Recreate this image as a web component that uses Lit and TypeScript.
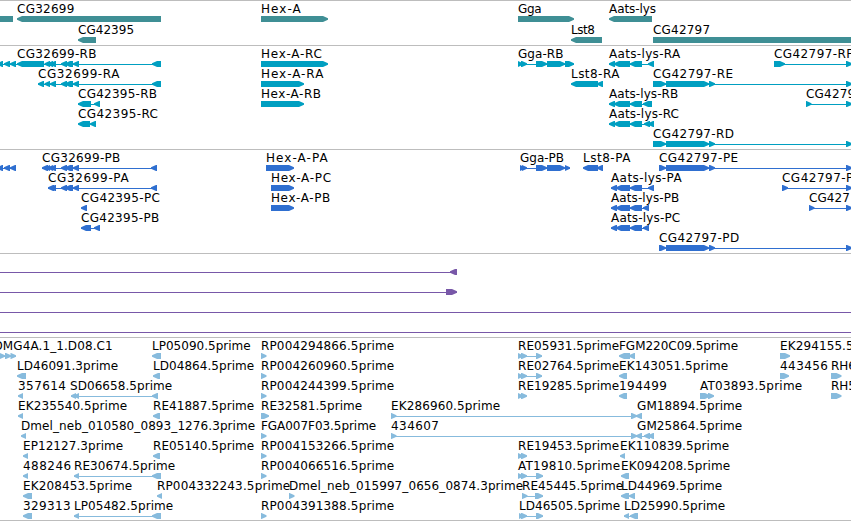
import { LitElement, html, svg, css } from "lit";
import { customElement, property } from "lit/decorators.js";

// Exon: [start, end]; positive strand points right, negative left, 0 is a plain bar.
type Strand = 1 | -1 | 0;
type Seg = [number, number, Strand?];
// Label: [text, x, right edge of the text (omitted when natural width is used)]
type Label = [string, number, number?];
interface Feature { row: number; dir: Strand; segs: Seg[]; span?: [number, number]; }
interface Track { height: number; color: string; rows: number[]; labels: [number, Label[]][]; features: Feature[]; }

const f = (row: number, dir: Strand, segs: Seg[], span?: [number, number]): Feature => ({ row, dir, segs, span });

const END: Seg = [846, 852];
const aats: Seg[] = [[609, 615], [614, 630], [630, 642]];
const aatsP: Seg[] = [[611, 617], [616, 630], [630, 642]];
const dot: Seg[] = [[261, 266.5]];
const pair: Seg[] = [[518, 523], [521, 527]];
const left: Seg[] = [[-3, 3], [4, 10], [10, 16]];
const mid: Seg[] = [[61, 67], [65, 73], [73, 79]];

const genes: Track = {
  height: 45, color: "#3f8f95", rows: [16, 37],
  labels: [
    [0, [["CG32699", 17, 73.7], ["Hex-A", 261, 300], ["Gga", 518, 541], ["Aats-lys", 609, 655.3]]],
    [1, [["CG42395", 78, 133.4], ["Lst8", 571, 594.3], ["CG42797", 653, 709.4]]],
  ],
  features: [
    f(0, 0, [[-5, 13]]), f(0, -1, [[17, 161]]), f(0, 1, [[261, 328]]), f(0, 1, [[518, 574]]), f(0, -1, [[609, 652]]),
    f(1, -1, [[78, 96]]), f(1, -1, [[571, 602]]), f(1, 0, [[653, 852]]),
  ],
};

const transcripts: Track = {
  height: 104, color: "#009fc1", rows: [16, 36, 56, 76, 96],
  labels: [
    [0, [["CG32699-RB", 17, 95.7], ["Hex-A-RC", 261, 321.3], ["Gga-RB", 518, 562.7], ["Aats-lys-RA", 609, 679.5], ["CG42797-RF", 774, 852.4]]],
    [1, [["CG32699-RA", 38, 118.7], ["Hex-A-RA", 261, 322.7], ["Lst8-RA", 571, 618.7], ["CG42797-RE", 653, 732.3]]],
    [2, [["CG42395-RB", 78, 156.3], ["Hex-A-RB", 261, 320.3], ["Aats-lys-RB", 609, 677.5], ["CG42797", 806, 862.4]]],
    [3, [["CG42395-RC", 78, 157.3], ["Aats-lys-RC", 609, 678.3]]],
    [4, [["CG42797-RD", 653, 733.3]]],
  ],
  features: [
    f(0, -1, [...left, [17, 44], [44.5, 50], [47.5, 53], [50, 56], ...mid, [152, 161]], [-3, 161]),
    f(0, 1, [[261, 328]]),
    f(0, 1, [[518, 523], [521, 527], [536, 547], [547, 565], [565, 574]], [518, 574]),
    f(0, -1, [...aats, [648, 654]], [609, 654]),
    f(0, 1, [[774, 785], END], [774, 852]),
    f(1, -1, [[38, 44], [44.5, 50], [50, 56], ...mid, [152, 161]], [38, 161]),
    f(1, 1, [[261, 304]]),
    f(1, -1, [[571, 598], [597, 603]]),
    f(1, 1, [[653, 666], [666, 709], [709, 715], END], [653, 852]),
    f(2, -1, [[78, 91], [94, 100]], [78, 100]),
    f(2, 1, [[261, 304]]),
    f(2, -1, [...aats, [643, 652]], [609, 652]),
    f(2, 1, [[806, 811.5], END], [806, 852]),
    f(3, -1, [[78, 90], [90, 96]]),
    f(3, -1, [...aats, [644, 650], [648, 654]], [609, 654]),
    f(4, 1, [[653, 666], [666, 709], [709, 715], END], [653, 852]),
  ],
};

const proteins: Track = {
  height: 104, color: "#2f6fd0", rows: [16, 36, 56, 76, 96],
  labels: [
    [0, [["CG32699-PB", 42, 119.6], ["Hex-A-PA", 266, 327], ["Gga-PB", 520, 563.4], ["Lst8-PA", 583, 629.7], ["CG42797-PE", 659, 737.5]]],
    [1, [["CG32699-PA", 48, 128], ["Hex-A-PC", 271, 330.4], ["Aats-lys-PA", 611, 681], ["CG42797-PF", 782, 860]]],
    [2, [["CG42395-PC", 81, 159.3], ["Hex-A-PB", 271, 329.6], ["Aats-lys-PB", 611, 678.6], ["CG427", 809, 849.2]]],
    [3, [["CG42395-PB", 81, 158.5], ["Aats-lys-PC", 611, 679.5]]],
    [4, [["CG42797-PD", 659, 738.5]]],
  ],
  features: [
    f(0, -1, left, [-3, 16]),
    f(0, -1, [[42, 48], [45, 50], [48, 53], [50, 56], ...mid, [151, 157]], [42, 157]),
    f(0, 1, [[266, 294]]),
    f(0, 1, [[520, 525], [522, 527], [536, 547], [547, 565], [565, 570]], [520, 570]),
    f(0, -1, [[583, 598], [597, 603]]),
    f(0, 1, [[659, 666], [666, 709], [709, 715], END], [659, 852]),
    f(1, -1, [[48, 54], [50, 56], ...mid, [151, 157]], [48, 157]),
    f(1, 1, [[271, 294]]),
    f(1, -1, [...aatsP, [648, 654]], [611, 654]),
    f(1, 1, [[782, 788], END], [782, 852]),
    f(2, -1, [[81, 87]]),
    f(2, 1, [[271, 294]]),
    f(2, -1, [...aatsP, [643, 649]], [611, 649]),
    f(2, 1, [[809, 814.5], END], [809, 852]),
    f(3, -1, [[81, 91], [94, 100]], [81, 100]),
    f(3, -1, [...aatsP, [643, 649]], [611, 649]),
    f(4, 1, [[659, 666], [666, 709], [709, 715], END], [659, 852]),
  ],
};

const insertions: Track = {
  height: 84, color: "#7858a8", rows: [16, 36, 56, 76], labels: [],
  features: [
    f(0, -1, [[450, 457]], [0, 457]),
    f(1, 1, [[446, 457]], [0, 457]),
    f(2, 0, [], [0, 852]),
    f(3, 0, [], [0, 852]),
  ],
};

const ests: Track = {
  height: 183, color: "#87bbdd", rows: [16, 36, 56, 76, 96, 116, 136, 156, 176],
  labels: [
    [0, [["DMG4A.1_1.D08.C1", -6.5, 112], ["LP05090.5prime", 152, 250], ["RP004294866.5prime", 261, 393.5], ["RE05931.5prime", 518, 618.5], ["FGM220C09.5prime", 619, 737.4], ["EK294155.5prime", 780, 888.5]]],
    [1, [["LD46091.3prime", 17, 117.5], ["LD04864.5prime", 153, 253.5], ["RP004260960.5prime", 261, 393.5], ["RE02764.5prime", 518, 618.5], ["EK143051.5prime", 619, 727.5], ["443456", 780, 827.3], ["RH6", 831]]],
    [2, [["357614", 18, 65.3], ["SD06658.5prime", 70, 171.5], ["RP004244399.5prime", 261, 393.5], ["RE19285.5prime", 518, 618.5], ["194499", 619, 666.3], ["AT03893.5prime", 700, 801.5], ["RH5", 831]]],
    [3, [["EK235540.5prime", 18, 126.5], ["RE41887.5prime", 153, 253.5], ["RE32581.5prime", 261, 361.5], ["EK286960.5prime", 391, 499.5], ["GM18894.5prime", 637, 741.5]]],
    [4, [["Dmel_neb_010580_0893_1276.3prime", 21, 254.5], ["FGA007F03.5prime", 261, 375.5], ["434607", 391, 438.3], ["GM25864.5prime", 637, 741.5]]],
    [5, [["EP12127.3prime", 23, 122.5], ["RE05140.5prime", 153, 253.5], ["RP004153266.5prime", 261, 393.5], ["RE19453.5prime", 518, 618.5], ["EK110839.5prime", 620, 728.5]]],
    [6, [["488246", 23, 70.5], ["RE30674.5prime", 74, 174.5], ["RP004066516.5prime", 261, 393.5], ["AT19810.5prime", 518, 619.4], ["EK094208.5prime", 621, 729.5]]],
    [7, [["EK208453.5prime", 23, 131.5], ["RP004332243.5prime", 157, 289.5], ["Dmel_neb_015997_0656_0874.3prime", 289, 522.5], ["RE45445.5prime", 522, 622.5], ["LD44969.5prime", 621, 721.5]]],
    [8, [["329313", 23, 70], ["LP05482.5prime", 74, 172.5], ["RP004391388.5prime", 261, 393.5], ["LD46505.5prime", 519, 619.4], ["LD25990.5prime", 624, 724.5]]],
  ],
  features: [
    f(0, 1, [[-1, 5], [5, 11], [10.5, 16]], [-3, 16]), f(0, -1, [[152, 161]]), f(0, 1, dot),
    f(0, 1, [...pair, [536, 542]], [518, 542]), f(0, -1, [[619, 630], [629, 635]]), f(0, 1, [[780, 790]]),
    f(1, -1, [[17, 26]]), f(1, -1, [[153, 160]]), f(1, 1, dot),
    f(1, 1, [...pair, [536, 542]], [518, 542]), f(1, -1, [[619, 627]]), f(1, 1, [[780, 789]]), f(1, 1, [[831, 841.5]]),
    f(2, -1, [[18, 23]]), f(2, -1, [[71, 76], [74, 79], [152, 158]], [71, 158]), f(2, 1, dot),
    f(2, 1, pair), f(2, -1, [[619, 627]]), f(2, 1, [[700, 710], [708, 714]]), f(2, 1, [[831, 841.5]]),
    f(3, -1, [[18, 23]]), f(3, -1, [[153, 160]]), f(3, 1, [[261, 269]]),
    f(3, 1, [[391, 396.5], [631, 637], [636, 642, -1]], [391, 642]),
    f(4, -1, [[21, 26]]), f(4, 1, dot),
    f(4, 1, [[391, 396.5], [631, 637], [636, 642, -1], [644, 650, -1], [648, 654, -1]], [391, 654]),
    f(5, -1, [[23, 28]]), f(5, -1, [[153, 160]]), f(5, 1, dot), f(5, 1, pair), f(5, -1, [[620, 625]]),
    f(6, -1, [[23, 28]]), f(6, -1, [[74, 79], [152, 161]], [74, 161]), f(6, 1, dot),
    f(6, 1, [...pair, [536, 543]], [518, 543]), f(6, -1, [[621, 629]]),
    f(7, -1, [[23, 32]]), f(7, -1, [[157, 162]]), f(7, 1, [[289, 294.5]]),
    f(7, 1, [[522, 527.5], [535, 543]], [522, 543]), f(7, -1, [[621, 629], [629, 635]]),
    f(8, -1, [[23, 32]]), f(8, -1, [[74, 79], [152, 161]], [74, 161]), f(8, 1, dot),
    f(8, 1, [[519, 524], [521, 527], [536, 543]], [519, 543]), f(8, -1, [[624, 629], [630, 638]], [624, 638]),
  ],
};

@customElement("feature-track")
class FeatureTrack extends LitElement {
  @property({ attribute: false }) track!: Track;

  static styles = css`
    :host { display: block; box-sizing: border-box; border-top: 1px solid #bdbdbd; overflow: hidden; flex: none; }
    .canvas { display: block; }
    .label { font: 12px "DejaVu Sans", sans-serif; fill: #000; }
  `;

  private segment(y: number, [a, b, own]: Seg, dir: Strand) {
    const d = own ?? dir;
    const h = Math.min(5, b - a);
    const [t, u, v] = [y + 2.3, y + 3.7, y + 6];
    const points =
      d === 1 ? `${a},${y} ${b - h},${y} ${b},${t} ${b},${u} ${b - h},${v} ${a},${v}`
      : d === -1 ? `${b},${y} ${a + h},${y} ${a},${t} ${a},${u} ${a + h},${v} ${b},${v}`
      : `${a},${y} ${b},${y} ${b},${v} ${a},${v}`;
    return svg`<polygon points=${points}></polygon>`;
  }

  private label(y: number, [text, x, end]: Label) {
    return end === undefined
      ? svg`<text class="label" x=${x} y=${y}>${text}</text>`
      : svg`<text class="label" x=${x} y=${y} textLength=${end - x + 0.7}>${text}</text>`;
  }

  render() {
    const { height, color, rows, labels, features } = this.track;
    // Drawing starts below the one pixel separator.
    const top = (row: number) => rows[row] - 1;
    return html`<svg class="canvas" width="851" height=${height - 1}>
      <g fill=${color}>
        ${features.map((ft) => svg`
          ${ft.span ? svg`<rect x=${ft.span[0]} y=${top(ft.row) + 3} width=${ft.span[1] - ft.span[0]} height="1"></rect>` : ""}
          ${ft.segs.map((s) => this.segment(top(ft.row), s, ft.dir))}`)}
      </g>
      ${labels.map(([row, items]) => items.map((l) => this.label(top(row) - 3, l)))}
    </svg>`;
  }
}

@customElement("app-root")
class AppRoot extends LitElement {
  static styles = css`
    :host { display: flex; flex-direction: column; box-sizing: border-box; width: 851px; height: 521px;
      overflow: hidden; background: #fff; border-bottom: 1px solid #bdbdbd; }
  `;

  render() {
    return [genes, transcripts, proteins, insertions, ests].map(
      (t) => html`<feature-track .track=${t}></feature-track>`,
    );
  }
}
